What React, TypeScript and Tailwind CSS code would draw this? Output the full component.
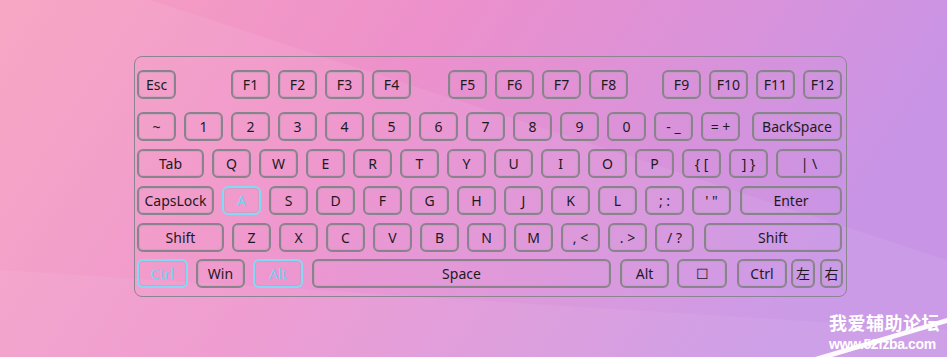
import React from 'react'

type K = { label: string; w?: number; ml?: number; hot?: boolean; auto?: boolean }

const std = (labels: string[], ml?: number): K[] => labels.map((label) => ({ label, ml }))

function Key({ k }: { k: K }) {
  return (
    <div
      className={`flex h-[29px] shrink-0 items-center justify-center rounded-[6px] border-2 text-[14px] leading-none shadow-[inset_0_0_0_1px_rgba(170,160,175,0.4)] ${
        k.hot ? 'border-[#86d9f4] text-[#74d2f2]' : 'border-[#8a838d] text-[#1d1a1f]'
      } ${k.auto ? 'ml-auto' : ''}`}
      style={{ width: k.w ?? 39, marginLeft: k.auto ? undefined : k.ml }}
    >
      {k.label}
    </div>
  )
}

function Row({ keys, gap = true, mt }: { keys: K[]; gap?: boolean; mt: string }) {
  return (
    <div className={`flex ${gap ? 'gap-2' : ''} ${mt}`}>
      {keys.map((k, i) => (
        <Key key={i} k={k} />
      ))}
    </div>
  )
}

const row1: K[] = [
  { label: 'Esc' },
  { label: 'F1', ml: 55 },
  ...std(['F2', 'F3', 'F4'], 8),
  { label: 'F5', ml: 37 },
  ...std(['F6', 'F7', 'F8'], 8),
  { label: 'F9', auto: true },
  ...std(['F10', 'F11', 'F12'], 8),
]

const row2: K[] = [
  ...std(['~', '1', '2', '3', '4', '5', '6', '7', '8', '9', '0', '- _', '= +']),
  { label: 'BackSpace', w: 90, auto: true },
]

const row3: K[] = [
  { label: 'Tab', w: 67 },
  ...std(['Q', 'W', 'E', 'R', 'T', 'Y', 'U', 'I', 'O', 'P', '{ [', '] }']),
  { label: '| \\', w: 66, auto: true },
]

const row4: K[] = [
  { label: 'CapsLock', w: 77 },
  { label: 'A', hot: true },
  ...std(['S', 'D', 'F', 'G', 'H', 'J', 'K', 'L', '; :', "' \""]),
  { label: 'Enter', w: 102, auto: true },
]

const row5: K[] = [
  { label: 'Shift', w: 87 },
  ...std(['Z', 'X', 'C', 'V', 'B', 'N', 'M', ', <', '. >', '/ ?']),
  { label: 'Shift', w: 138, auto: true },
]

const row6: K[] = [
  { label: 'Ctrl', w: 51, hot: true },
  { label: 'Win', w: 49, ml: 8 },
  { label: 'Alt', w: 50, ml: 8, hot: true },
  { label: 'Space', w: 299, ml: 9 },
  { label: 'Alt', w: 49, ml: 9 },
  { label: '☐', w: 50, ml: 8 },
  { label: 'Ctrl', w: 50, ml: 10 },
  { label: '左', w: 24, ml: 4 },
  { label: '右', w: 23, ml: 5 },
]

function Backdrop() {
  return (
    <svg className="absolute inset-0 h-full w-full" viewBox="0 0 947 357" preserveAspectRatio="none">
      <defs>
        <linearGradient id="bg" x1="0" y1="0" x2="1" y2="0.25">
          <stop offset="0" stopColor="#f8a1bf" />
          <stop offset="0.45" stopColor="#ed90cc" />
          <stop offset="1" stopColor="#c894e6" />
        </linearGradient>
      </defs>
      <rect width="947" height="357" fill="url(#bg)" />
      <polygon points="0,0 150,0 947,260 947,357 0,357" fill="#ffffff" opacity="0.07" />
      <polygon points="0,270 947,330 947,357 0,357" fill="#ffffff" opacity="0.06" />
      <polygon points="815,357 947,318 947,323 832,357" fill="#ffffff" opacity="0.95" />
    </svg>
  )
}

export default function App() {
  return (
    <div className="relative h-[357px] w-[947px] overflow-hidden font-['Noto_Sans','Noto_Sans_CJK_SC',sans-serif]">
      <Backdrop />
      <div className="relative pl-[134px] pt-[56px]">
        <div className="h-[241px] w-[713px] rounded-[8px] border border-[#8a8590] pl-[2px] pr-[4px] pt-[13px]">
          <Row keys={row1} gap={false} mt="" />
          <Row keys={row2} mt="mt-[13px]" />
          <Row keys={row3} mt="mt-[8px]" />
          <Row keys={row4} mt="mt-[8px]" />
          <Row keys={row5} mt="mt-[8px]" />
          <Row keys={row6} gap={false} mt="mt-[7px]" />
        </div>
      </div>
      <div className="absolute right-[7px] top-[312px] flex flex-col items-start text-white">
        <div className="text-[18px] font-bold leading-[23px] tracking-[0.5px]">我爱辅助论坛</div>
        <div className="font-['Liberation_Sans',sans-serif] text-[14px] font-bold leading-[18px] tracking-[-0.4px]">www.52fzba.com</div>
      </div>
    </div>
  )
}
